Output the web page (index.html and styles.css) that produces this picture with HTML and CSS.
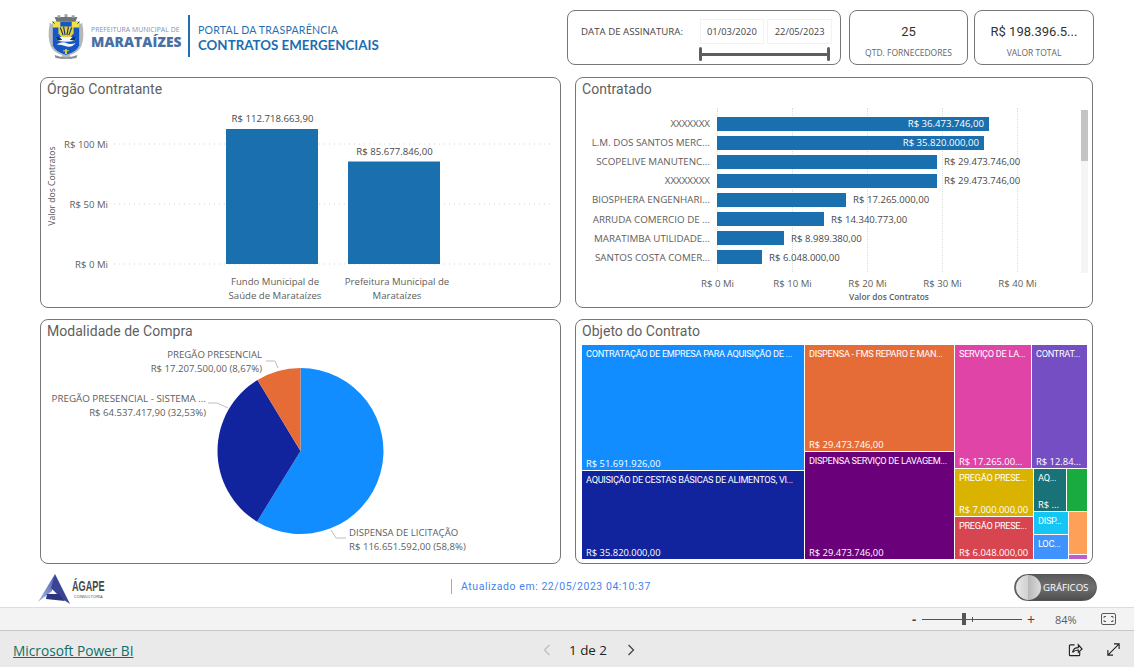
FILE: index.html
```html
<!DOCTYPE html>
<html lang="pt-BR">
<head>
<meta charset="utf-8">
<title>Contratos Emergenciais</title>
<link rel="stylesheet" href="styles.css">
</head>
<body>
<div class="report">
  <header class="top">
    <div class="brand">
      <svg class="crest" viewBox="0 0 40 48" aria-hidden="true">
        <path d="M8 3h24l-2 5H10z" fill="#6f7478"/>
        <path d="M11 1h3v3h-3zM18.5 0h3v3h-3zM26 1h3v3h-3z" fill="#9a9ea1"/>
        <path d="M3 9Q0 24 4 34q4 7 12 9l-2 4h12l-2-4q8-2 12-9 4-10 1-25l-3 2v22q-3 7-14 10Q9 40 6 33V11z" fill="#b4b8ba"/>
        <path d="M6 8h28v25q-3 7-14 10Q9 40 6 33z" fill="#1557c4"/>
        <path d="M6 8h8v6H6zM26 8h8v6h-8z" fill="#f1e24a"/>
        <path d="M6 8l2 2M34 8l-2 2" stroke="#1b2a60"/>
        <path d="M12 13h16v7l-3 4H15l-3-4z" fill="#e3d33a"/>
        <path d="M14 14l3 8M17.5 13l1.5 9M22.5 13L21 22M26 14l-3 8" stroke="#26346e" stroke-width="1.2"/>
        <path d="M9 24h22l-2 4q-9 2-18 0z" fill="#f7f8fb"/>
        <path d="M9 24h4l3 3-5 1zM31 24h-4l-3 3 5 1z" fill="#13306f"/>
        <path d="M10 32q6-4 11-1.5 5 2 9-.5-3 5-9 4-6-2-11-2z" fill="#f7f8fb"/>
        <path d="M19 37h2v5h-2zM17 38h6v1h-6z" fill="#e3d33a"/>
        <path d="M8 43q12 5 24 0l-1 3q-11 2-22 0z" fill="#8b8f92"/>
      </svg>
      <div class="city"><span class="city-top">PREFEITURA MUNICIPAL DE</span><span class="city-name">MARATAÍZES</span></div>
      <div class="portal"><span class="portal-top">PORTAL DA TRASPARÊNCIA</span><span class="portal-name">CONTRATOS EMERGENCIAIS</span></div>
    </div>
    <div class="kpis">
      <section class="card date-card">
        <div class="date-row">
          <span class="date-label">DATA DE ASSINATURA:</span>
          <span class="date-box">01/03/2020</span>
          <span class="date-box">22/05/2023</span>
        </div>
        <div class="range"><span class="range-end"></span><span class="range-line"></span><span class="range-end"></span></div>
      </section>
      <section class="card kpi qtd"><strong class="kpi-value">25</strong><span class="kpi-label">QTD. FORNECEDORES</span></section>
      <section class="card kpi total"><strong class="kpi-value">R$ 198.396.5...</strong><span class="kpi-label">VALOR TOTAL</span></section>
    </div>
  </header>

  <main class="grid">
    <section class="panel">
      <h2 class="panel-title">Órgão Contratante</h2>
      <svg class="chart chart-top" viewBox="41 100 519 206" role="img" aria-label="Órgão Contratante">
        <g class="grid-dots"><path d="M114 144H552M114 204H552M114 264H552"/></g>
        <text class="axis-title" transform="translate(55 186) rotate(-90)" text-anchor="middle">Valor dos Contratos</text>
        <text class="tick" x="108" y="148" text-anchor="end">R$ 100 Mi</text>
        <text class="tick" x="108" y="208" text-anchor="end">R$ 50 Mi</text>
        <text class="tick" x="108" y="268" text-anchor="end">R$ 0 Mi</text>
        <rect class="bar-col" x="226" y="129" width="92" height="135"/>
        <rect class="bar-col" x="348" y="161.5" width="92" height="102.5"/>
        <text class="label" x="272.5" y="122" text-anchor="middle">R$ 112.718.663,90</text>
        <text class="label" x="394.5" y="155" text-anchor="middle">R$ 85.677.846,00</text>
        <text class="tick" x="275" y="285" text-anchor="middle">Fundo Municipal de</text>
        <text class="tick" x="275" y="299" text-anchor="middle">Saúde de Marataízes</text>
        <text class="tick" x="397" y="285" text-anchor="middle">Prefeitura Municipal de</text>
        <text class="tick" x="397" y="299" text-anchor="middle">Marataízes</text>
      </svg>
    </section>

    <section class="panel">
      <h2 class="panel-title">Contratado</h2>
      <div class="hbars">
        <span class="vline vline-0"></span><span class="vline vline-1"></span><span class="vline vline-2"></span><span class="vline vline-3"></span><span class="vline vline-4"></span>
        <div class="hrow"><span class="hname">XXXXXXX</span><span class="hbar" style="width:272px"><span class="hval-in">R$ 36.473.746,00</span></span></div>
        <div class="hrow"><span class="hname">L.M. DOS SANTOS MERC...</span><span class="hbar" style="width:267px"><span class="hval-in">R$ 35.820.000,00</span></span></div>
        <div class="hrow"><span class="hname">SCOPELIVE MANUTENC...</span><span class="hbar" style="width:220px"></span><span class="hval">R$ 29.473.746,00</span></div>
        <div class="hrow"><span class="hname">XXXXXXXX</span><span class="hbar" style="width:220px"></span><span class="hval">R$ 29.473.746,00</span></div>
        <div class="hrow"><span class="hname">BIOSPHERA ENGENHARI...</span><span class="hbar" style="width:129px"></span><span class="hval">R$ 17.265.000,00</span></div>
        <div class="hrow"><span class="hname">ARRUDA COMERCIO DE ...</span><span class="hbar" style="width:107px"></span><span class="hval">R$ 14.340.773,00</span></div>
        <div class="hrow"><span class="hname">MARATIMBA UTILIDADE...</span><span class="hbar" style="width:67px"></span><span class="hval">R$ 8.989.380,00</span></div>
        <div class="hrow"><span class="hname">SANTOS COSTA COMER...</span><span class="hbar" style="width:45px"></span><span class="hval">R$ 6.048.000,00</span></div>
        <div class="scroll"><span class="thumb"></span></div>
      </div>
      <div class="haxis"><span>R$ 0 Mi</span><span>R$ 10 Mi</span><span>R$ 20 Mi</span><span>R$ 30 Mi</span><span>R$ 40 Mi</span></div>
      <div class="haxis-title">Valor dos Contratos</div>
    </section>

    <section class="panel">
      <h2 class="panel-title">Modalidade de Compra</h2>
      <svg class="chart chart-pie" viewBox="41 342 519 220" role="img" aria-label="Modalidade de Compra">
        <path d="M300.5 451V368A83 83 0 1 1 257 521.7Z" fill="#118dff"/>
        <path d="M300.5 451L257 521.7A83 83 0 0 1 257.5 380Z" fill="#12239e"/>
        <path d="M300.5 451L257.5 380A83 83 0 0 1 300.5 368Z" fill="#e66c37"/>
        <path class="leader" d="M278 368L275 361H266M228 408L217 403H208M331 530L336 538H346"/>
        <text class="tick" x="262" y="358" text-anchor="end">PREGÃO PRESENCIAL</text>
        <text class="tick" x="262" y="372" text-anchor="end">R$ 17.207.500,00 (8,67%)</text>
        <text class="tick caps" x="206" y="402" text-anchor="end">PREGÃO PRESENCIAL - SISTEMA ...</text>
        <text class="tick" x="206" y="416" text-anchor="end">R$ 64.537.417,90 (32,53%)</text>
        <text class="tick" x="349" y="536">DISPENSA DE LICITAÇÃO</text>
        <text class="tick" x="349" y="550">R$ 116.651.592,00 (58,8%)</text>
      </svg>
    </section>

    <section class="panel">
      <h2 class="panel-title">Objeto do Contrato</h2>
      <div class="treemap">
        <div class="tm-col tm-a">
          <div class="tile t-blue tm-a1"><span class="cap">CONTRATAÇÃO DE EMPRESA PARA AQUISIÇÃO DE ...</span><span>R$ 51.691.926,00</span></div>
          <div class="tile t-navy tm-grow"><span class="cap">AQUISIÇÃO DE CESTAS BÁSICAS DE ALIMENTOS, VI...</span><span>R$ 35.820.000,00</span></div>
        </div>
        <div class="tm-col tm-b">
          <div class="tile t-orange tm-b1"><span class="cap">DISPENSA - FMS REPARO E MAN...</span><span>R$ 29.473.746,00</span></div>
          <div class="tile t-purple tm-grow"><span class="cap">DISPENSA SERVIÇO DE LAVAGEM...</span><span>R$ 29.473.746,00</span></div>
        </div>
        <div class="tm-col tm-c">
          <div class="tm-row tm-c1">
            <div class="tile t-pink tm-c1a"><span class="cap">SERVIÇO DE LA...</span><span>R$ 17.265.00...</span></div>
            <div class="tile t-violet tm-grow"><span class="cap">CONTRAT...</span><span>R$ 12.84...</span></div>
          </div>
          <div class="tm-row tm-grow">
            <div class="tm-col tm-c2">
              <div class="tile t-yellow tm-c2a"><span class="cap">PREGÃO PRESE...</span><span>R$ 7.000.000,00</span></div>
              <div class="tile t-red tm-grow"><span class="cap">PREGÃO PRESE...</span><span>R$ 6.048.000,00</span></div>
            </div>
            <div class="tm-col tm-grow">
              <div class="tm-row tm-c3">
                <div class="tile t-teal tm-c3a"><span class="cap">AQ...</span><span>R$ ...</span></div>
                <div class="tile t-green tm-grow"></div>
              </div>
              <div class="tm-row tm-grow">
                <div class="tm-col tm-c4">
                  <div class="tile t-cyan tm-c4a"><span class="cap">DISP...</span></div>
                  <div class="tile t-sky tm-grow"><span class="cap">LOC...</span></div>
                </div>
                <div class="tm-col tm-grow">
                  <div class="tile t-peach tm-grow"></div>
                  <div class="tile t-lilac tm-c5"></div>
                </div>
              </div>
            </div>
          </div>
        </div>
      </div>
    </section>
  </main>

  <footer class="foot">
    <div class="agape">
      <svg class="agape-mark" viewBox="0 0 32 30" aria-hidden="true">
        <defs><linearGradient id="agapeBlade" x1="0" y1="1" x2="1" y2="0"><stop offset="0" stop-color="#a9bbe6"/><stop offset="1" stop-color="#4a5ab0"/></linearGradient></defs>
        <path d="M17 0L0 28 14 17z" fill="url(#agapeBlade)"/>
        <path d="M17 0L13 14 23 24 32 30z" fill="#3a4494"/>
        <path d="M9 20h12l6 7-19-2z" fill="#2b3580"/>
      </svg>
      <div class="agape-text"><span class="agape-name">ÁGAPE</span><span class="agape-sub">CONSULTORIA</span></div>
    </div>
    <div class="updated">Atualizado em: 22/05/2023 04:10:37</div>
    <div class="toggle"><span class="knob"></span><span class="toggle-text">GRÁFICOS</span></div>
  </footer>
</div>

<div class="zoombar">
  <span class="zoom-minus">-</span>
  <span class="slider"><span class="slider-mid"></span><span class="slider-thumb"></span></span>
  <span class="zoom-plus">+</span>
  <span class="zoom-pct">84%</span>
  <svg class="fit" viewBox="0 0 15 12" aria-hidden="true">
    <rect x=".5" y=".5" width="14" height="11" rx="1.5" fill="none" stroke="#5a5a5a"/>
    <path d="M3 5V3.5H5M10 3.5H12V5M12 7V8.5H10M5 8.5H3V7" fill="none" stroke="#5a5a5a"/>
  </svg>
</div>

<nav class="pbibar">
  <a class="pbi-link" href="#">Microsoft Power BI</a>
  <div class="pager">
    <svg class="chev" viewBox="0 0 8 12" aria-hidden="true"><path d="M6.5 1L1.5 6l5 5" fill="none" stroke="#c0c0c0" stroke-width="1.3"/></svg>
    <span class="pager-text">1 de 2</span>
    <svg class="chev" viewBox="0 0 8 12" aria-hidden="true"><path d="M1.5 1l5 5-5 5" fill="none" stroke="#444" stroke-width="1.3"/></svg>
  </div>
  <div class="pbi-icons">
    <svg class="pbi-icon" viewBox="0 0 16 16" aria-hidden="true">
      <path d="M7 3H2.5A1 1 0 0 0 1.5 4v9.5a1 1 0 0 0 1 1h9a1 1 0 0 0 1-1V10" fill="none" stroke="#222" stroke-width="1.2"/>
      <path d="M5 11c.5-3.5 3-5 6-5V3l4 4.5L11 11V8.5C8.5 8.5 6.500 9 5 11z" fill="none" stroke="#222" stroke-width="1.2"/>
    </svg>
    <svg class="pbi-icon" viewBox="0 0 16 16" aria-hidden="true">
      <path d="M2 14L14 2M8.5 2H14V7.5M2 8.5V14H7.5" fill="none" stroke="#222" stroke-width="1.2"/>
    </svg>
  </div>
</nav>
</body>
</html>
```
FILE: styles.css
```css
* { box-sizing: border-box; }
html, body { margin: 0; height: 100%; }
body {
  width: 1134px;
  height: 667px;
  overflow: hidden;
  background: #fff;
  display: flex;
  flex-direction: column;
  font-family: "Open Sans", "Liberation Sans", sans-serif;
  color: #605e5c;
}
.report { height: 607px; display: flex; flex-direction: column; }

/* header */
.top { height: 77px; display: flex; justify-content: space-between; padding: 10px 40px 0 47px; }
.brand { display: flex; align-items: flex-start; }
.crest { width: 38px; height: 48px; margin-top: 3px; }
.city { margin: 16px 6px 0 6px; width: 91px; display: flex; flex-direction: column; color: #4d75a8; }
.city-top { font-size: 6.8px; line-height: 8px; white-space: nowrap; color: #7a94b8; letter-spacing: .07px; }
.city-name { font-size: 13.8px; line-height: 16px; font-weight: 800; letter-spacing: .1px; color: #4a6fa3; white-space: nowrap; }
.portal { border-left: 2px solid #1f6fb4; height: 42px; margin-top: 5px; padding: 8px 0 0 8px; display: flex; flex-direction: column; color: #1f6fb4; }
.portal-top { font-size: 10.6px; line-height: 14px; font-family: "Lato", sans-serif; letter-spacing: .2px; white-space: nowrap; }
.portal-name { font-size: 13.3px; line-height: 17px; font-weight: 700; font-family: "Lato", sans-serif; letter-spacing: .02px; white-space: nowrap; color: #1a6db3; }
.kpis { display: flex; gap: 6px; height: 55px; }
.card { border: 1px solid #777; border-radius: 8px; }
.date-card { width: 274px; margin-right: 2px; padding: 8px 8px 0 13px; }
.date-row { display: flex; align-items: center; gap: 3px; }
.date-label { width: 116px; font-size: 9.7px; color: #444; white-space: nowrap; }
.date-box { width: 65px; height: 25px; border: 1px solid #f2f2f2; font-size: 9.4px; color: #444; display: flex; align-items: center; justify-content: center; }
.range { display: flex; align-items: center; margin: 3px 0 0 118px; width: 131px; }
.range-end { width: 3px; height: 14px; background: #5e5e5e; border-radius: 2px; }
.range-line { flex: 1; height: 3px; background: #5e5e5e; }
.kpi { display: flex; flex-direction: column; align-items: center; padding-top: 11px; }
.qtd { width: 119px; }
.total { width: 120px; }
.kpi-value { font-weight: 400; font-size: 13px; line-height: 19px; color: #333; white-space: nowrap; font-family: "Roboto", sans-serif; }
.kpi-label { margin-top: 6px; font-size: 8.5px; line-height: 12px; color: #666; white-space: nowrap; }

/* panels */
.grid {
  margin-left: 40px;
  display: grid;
  grid-template-columns: 521px 518px;
  grid-template-rows: 231px 245px;
  column-gap: 14px;
  row-gap: 11px;
}
.panel { border: 1px solid #777; border-radius: 8px; overflow: hidden; position: relative; display: flex; flex-direction: column; }
.panel-title { margin: 0; height: 22px; padding: 2px 0 0 6px; font-family: "Roboto", sans-serif; font-size: 14px; line-height: 18px; font-weight: 400; letter-spacing: .03px; color: #5f5f5f; }
.chart { display: block; width: 519px; }
.chart-top { height: 206px; }
.chart-pie { height: 220px; }
.grid-dots path { stroke: #d2d2d2; stroke-dasharray: 1 4; fill: none; }
.bar-col { fill: #1a6fae; }
.tick, .label { font-family: "Open Sans", sans-serif; font-size: 9.6px; fill: #605e5c; }
.tick.caps { font-size: 9.8px; }
.label { fill: #484848; }
.axis-title { font-family: "Open Sans", sans-serif; font-size: 8.6px; fill: #555; }
.leader { fill: none; stroke: #bdbdbd; }

/* horizontal bars */
.hbars { position: relative; margin-top: 8px; height: 164px; padding: 6px 0 0 6px; }
.vline { position: absolute; top: 0; bottom: 0; border-left: 1px dotted #dcdcdc; }
.vline-0 { left: 141px; } .vline-1 { left: 216px; } .vline-2 { left: 291px; } .vline-3 { left: 366px; } .vline-4 { left: 441px; }
.hrow { position: relative; height: 19.1px; display: flex; align-items: center; }
.hname { width: 128px; margin-right: 7px; text-align: right; font-size: 9.8px; white-space: nowrap; color: #605e5c; }
.hbar { height: 14px; background: #1a6fae; display: flex; align-items: center; justify-content: flex-end; padding-right: 5px; flex: none; }
.hval { margin-left: 7px; font-size: 9.6px; white-space: nowrap; color: #484848; }
.hval-in { font-size: 9.6px; color: #fff; white-space: nowrap; }
.scroll { position: absolute; top: 2px; left: 505px; width: 7px; height: 163px; background: #f5f5f5; }
.thumb { display: block; height: 51px; background: #c4c4c4; }
.haxis { display: grid; grid-template-columns: repeat(5, 75px); margin: 5px 0 0 104px; font-size: 9.6px; line-height: 13px; justify-items: center; white-space: nowrap; }
.haxis-title { margin: 1px 0 0 273px; font-size: 8.4px; font-weight: 600; color: #605e5c; white-space: nowrap; }

/* treemap */
.treemap { display: flex; gap: 1px; height: 214px; margin: 3px 5px 0 6px; }
.tm-col { display: flex; flex-direction: column; gap: 1px; min-width: 0; }
.tm-row { display: flex; gap: 1px; min-width: 0; }
.tm-grow { flex: 1 1 0; min-width: 0; min-height: 0; }
.tm-a { width: 222px; } .tm-a1 { height: 125px; }
.tm-b { width: 149px; } .tm-b1 { height: 106px; }
.tm-c { flex: 1; }
.tm-c1 { height: 123px; } .tm-c1a { width: 76px; flex: none; }
.tm-c2 { width: 78px; } .tm-c2a { height: 47px; }
.tm-c3 { height: 42px; } .tm-c3a { width: 32px; flex: none; }
.tm-c4 { width: 34px; } .tm-c4a { height: 22px; }
.tm-c5 { height: 4px; flex: none; }
.tile { display: flex; flex-direction: column; justify-content: space-between; padding: 2px 3px 0 4px; font-size: 9.4px; line-height: 13px; color: #fff; white-space: nowrap; overflow: hidden; }
.cap { font-family: "Roboto", sans-serif; font-size: 9.2px; letter-spacing: -.3px; }
.t-blue { background: #118dff; } .t-navy { background: #12239e; } .t-orange { background: #e66c37; }
.t-purple { background: #6b007b; } .t-pink { background: #e044a7; } .t-violet { background: #744ec2; }
.t-yellow { background: #d9b300; } .t-red { background: #d64550; } .t-teal { background: #197278; }
.t-green { background: #1aab40; } .t-cyan { background: #15c6f4; } .t-sky { background: #4092ff; }
.t-peach { background: #ffa058; } .t-lilac { background: #be5dc9; }

/* footer */
.foot { flex: 1; position: relative; display: flex; align-items: flex-start; padding: 10px 37px 0 38px; }
.agape { display: flex; width: 413px; }
.agape-mark { width: 32px; height: 30px; }
.agape-text { display: flex; flex-direction: column; margin: 3px 0 0 2px; color: #4a4a4a; width: 33px; }
.agape-name { font-family: "Liberation Sans", sans-serif; font-size: 15px; line-height: 17px; font-weight: 700; transform: scaleX(.61); transform-origin: left; white-space: nowrap; }
.agape-sub { font-size: 4.2px; line-height: 5px; white-space: nowrap; margin-left: 2px; }
.updated { margin-top: 5px; border-left: 1px solid #aaa; padding-left: 9px; height: 15px; font-family: "Roboto", sans-serif; font-size: 10.5px; line-height: 15px; letter-spacing: .55px; color: #3f85ea; }
.toggle { margin-left: auto; width: 83px; height: 27px; border-radius: 14px; border: 1px solid #555; background: linear-gradient(#5a5a5a, #707070 50%, #4e4e4e); display: flex; align-items: center; padding-left: 1px; }
.knob { width: 25px; height: 25px; border-radius: 50%; background: linear-gradient(90deg, #e8e8e8, #cfcfcf 50%, #b9b9b9 50%, #dcdcdc); flex: none; }
.toggle-text { margin-left: 2px; font-size: 9.6px; color: #fff; white-space: nowrap; }

/* zoom bar */
.zoombar { height: 24px; background: #f3f3f3; border-top: 1px solid #ddd; border-bottom: 1px solid #c8c8c8; display: flex; align-items: center; font-size: 11px; color: #555; padding-left: 912px; }
.zoom-minus { width: 10px; font-weight: 700; font-size: 13px; color: #444; }
.slider { position: relative; width: 100px; height: 1px; background: #555; }
.slider-mid { position: absolute; left: 50px; top: -2px; width: 1px; height: 5px; background: #555; }
.slider-thumb { position: absolute; left: 40px; top: -6px; width: 4px; height: 12px; background: #555; }
.zoom-plus { margin-left: 5px; width: 10px; font-size: 14px; color: #444; }
.zoom-pct { margin-left: 18px; width: 39px; font-size: 11px; color: #605e5c; }
.fit { width: 15px; height: 12px; margin-left: 7px; }

/* power bi bar */
.pbibar { flex: 1; background: #eaeaea; display: flex; align-items: center; padding-left: 13px; position: relative; }
.pbi-link { margin-top: 3px; font-family: "Open Sans", sans-serif; font-size: 13.7px; color: #0f6f68; text-decoration: underline; width: 530px; white-space: nowrap; }
.pager { display: flex; align-items: center; margin-top: 1px; }
.chev { width: 8px; height: 12px; }
.pager-text { margin: 0 20px 0 18px; font-size: 13.4px; font-weight: 500; color: #222; white-space: nowrap; }
.pbi-icons { margin-left: auto; display: flex; gap: 23px; padding-right: 13px; }
.pbi-icon { width: 15px; height: 15px; }
```
